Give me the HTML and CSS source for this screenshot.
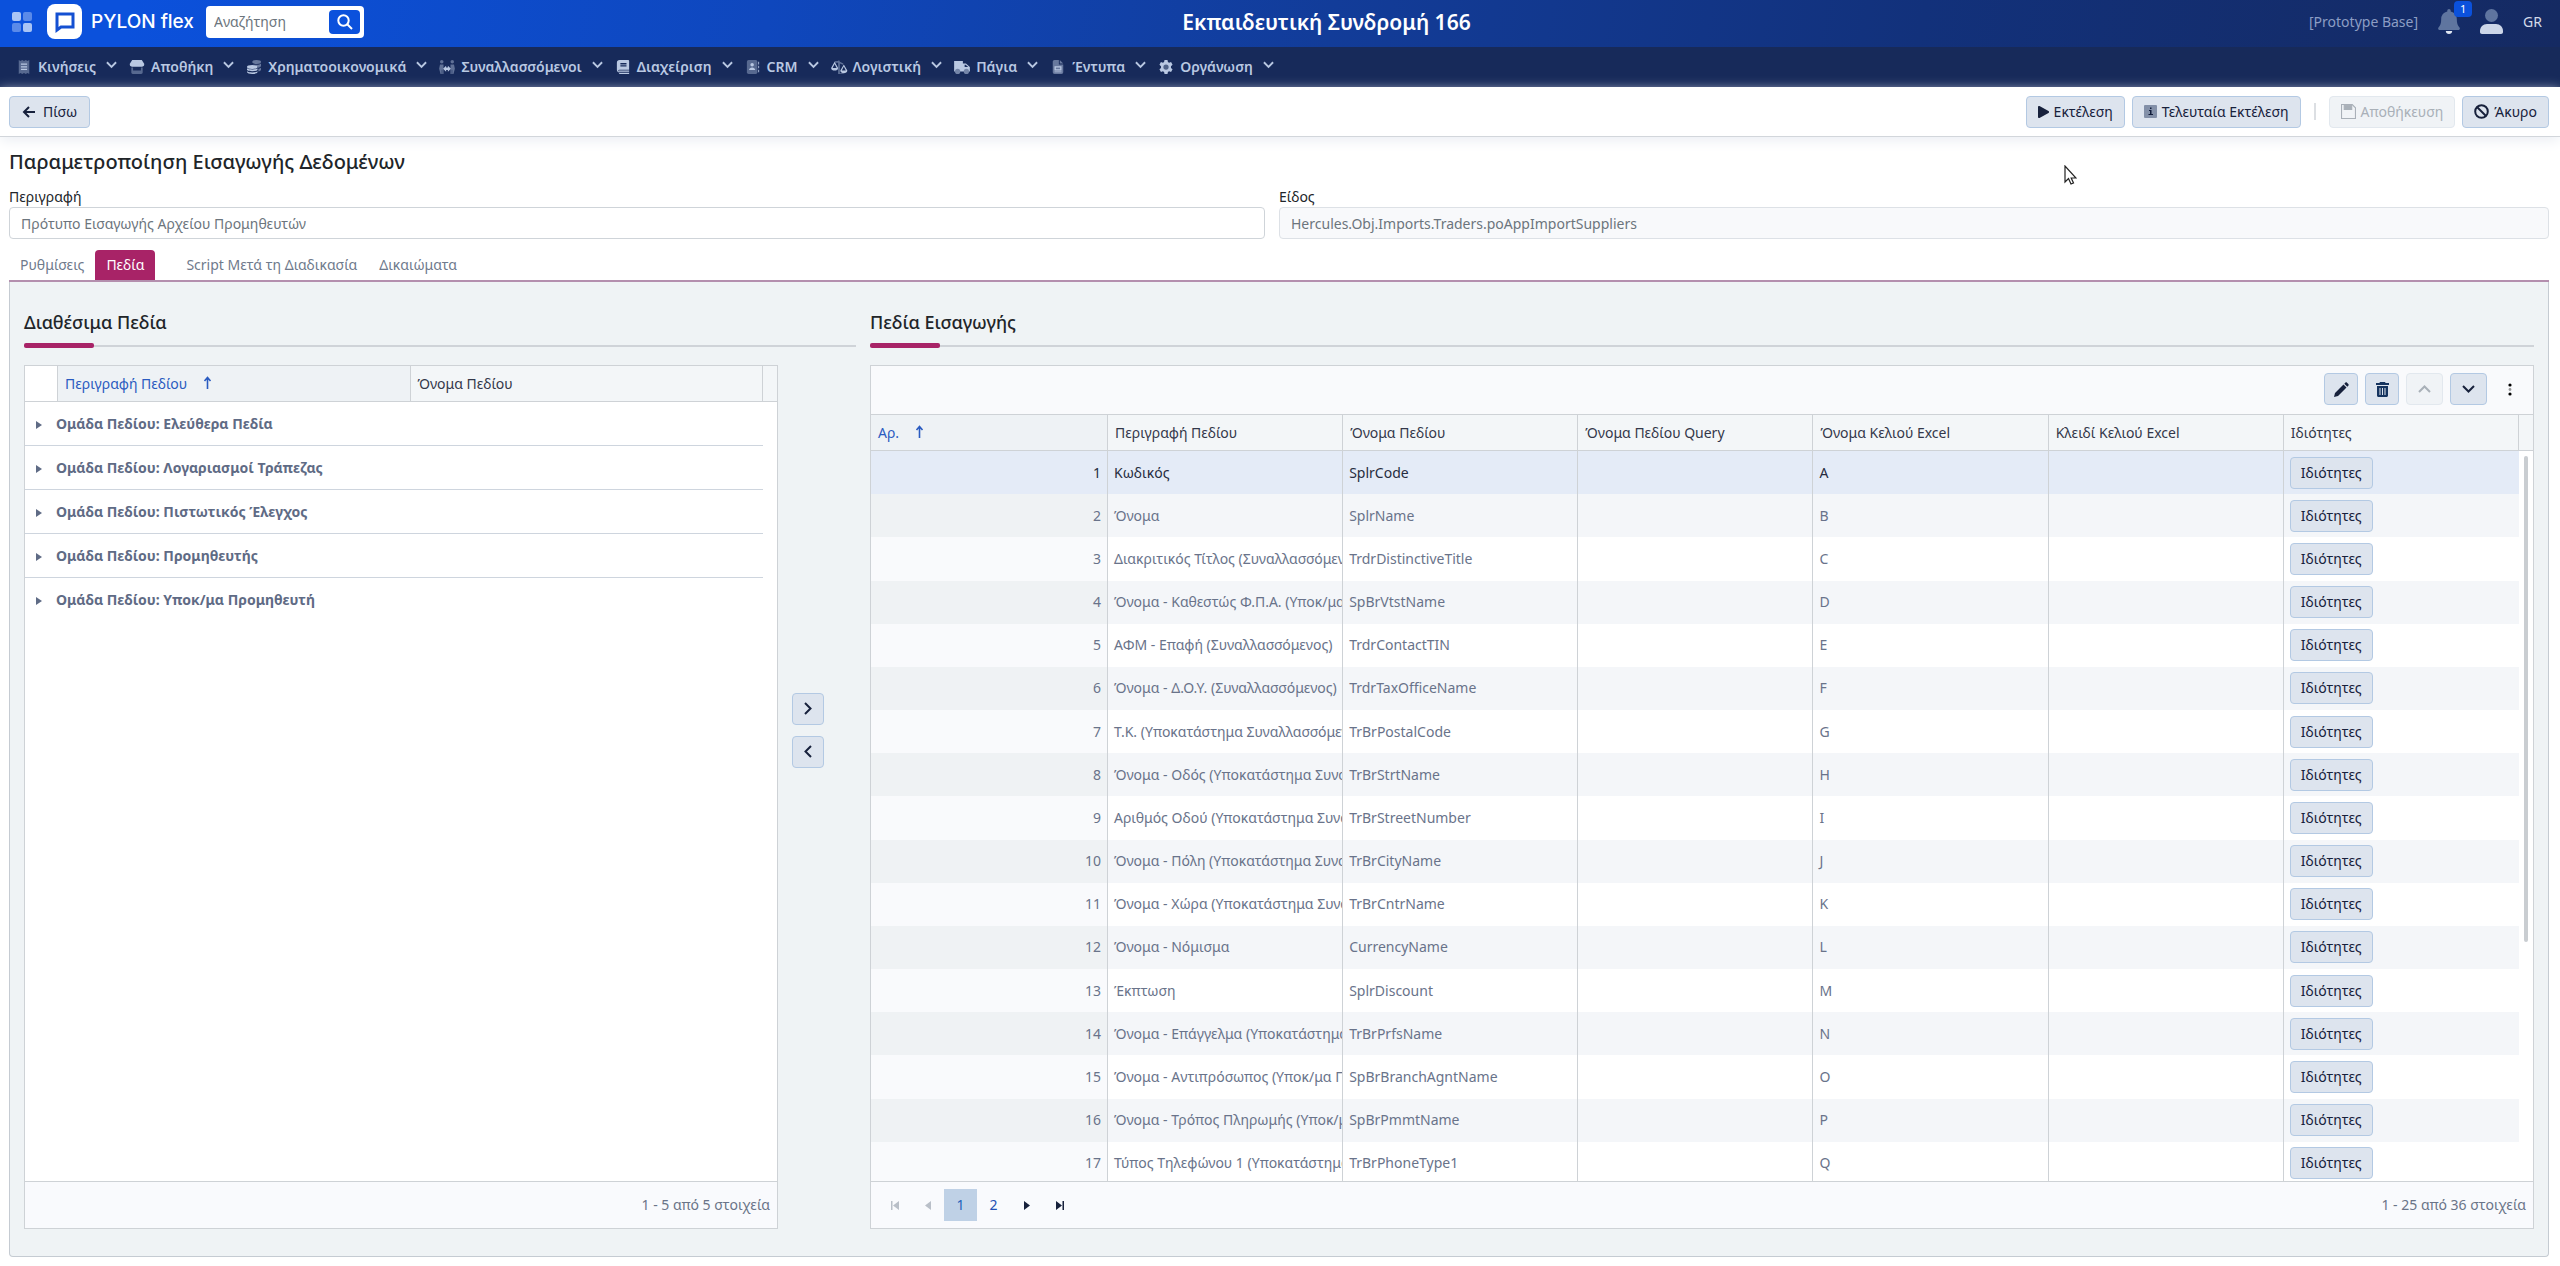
FILE: index.html
```html
<!DOCTYPE html>
<html lang="el">
<head>
  <meta charset="UTF-8" />
  <meta name="viewport" content="width=device-width, initial-scale=1.0"/>
  <title>PYLON flex - Παραμετροποίηση Εισαγωγής Δεδομένων</title>
  <link rel="stylesheet" href="styles.css">
</head>
<body>

  <svg class="defs" width="0" height="0">
    <symbol id="chev" viewBox="0 0 12 8"><path d="M1 1l5 5 5-5" fill="none" stroke="currentColor" stroke-width="2"/></symbol>
    <symbol id="up-arrow" viewBox="0 0 9 13"><path d="M4.500 13V2M1.500 5l3-3.500 3 3.500" fill="none" stroke="currentColor" stroke-width="1.600"/></symbol>
  </svg>

  <header class="topbar">
    <div class="brand">
      <svg class="apps" width="20" height="20" viewBox="0 0 20 20" fill="#a9c4f5">
        <rect width="9" height="9" rx="2"/><rect x="11" width="9" height="9" rx="2" opacity=".5"/>
        <rect y="11" width="9" height="9" rx="2" opacity=".5"/><rect x="11" y="11" width="9" height="9" rx="2"/>
      </svg>
      <svg class="logo" width="35" height="35" viewBox="0 0 35 35">
        <rect width="35" height="35" rx="8" fill="#fff"/>
        <path d="M10 26V10h16v13H14z" fill="none" stroke="#1450d2" stroke-width="3"/>
      </svg>
      <span class="brand-name">PYLON flex</span>
      <form class="search">
        <input type="text" placeholder="Αναζήτηση" aria-label="Αναζήτηση">
        <button type="button" aria-label="Αναζήτηση">
          <svg width="16" height="16" viewBox="0 0 16 16" fill="none" stroke="#fff" stroke-width="2"><circle cx="6.500" cy="6.500" r="5.200"/><path d="M10.500 10.500L15 15"/></svg>
        </button>
      </form>
    </div>
    <div class="company">Εκπαιδευτική Συνδρομή 166</div>
    <div class="user">
      <span class="base">[Prototype Base]</span>
      <a href="#" class="bell" aria-label="Ειδοποιήσεις">
        <svg width="22" height="25" viewBox="0 0 22 25"><path d="M11 0c1 0 1.700.8 1.700 1.700v.8c3.600.8 6.100 3.700 6.100 7.500 0 4.500 1 6.500 2.700 8.400.8 1 .3 2.600-1.200 2.600H1.700C.2 21-.3 19.400.500 18.400 2.200 16.500 3.200 14.500 3.200 10c0-3.800 2.500-6.700 6.100-7.500v-.8C9.300.800 10 0 11 0z" fill="#5f759f"/><path d="M7.800 22h6.400c0 1.700-1.400 3-3.200 3s-3.200-1.300-3.200-3z" fill="#dfe6f2"/></svg>
        <span class="badge">1</span>
      </a>
      <a href="#" aria-label="Χρήστης"><svg width="23" height="25" viewBox="0 0 23 25"><circle cx="11.500" cy="6.500" r="6.500" fill="#5f759f"/><path d="M7 15h9c4 0 7 3 7 7v1c0 1.200-.8 2-2 2H2c-1.200 0-2-.8-2-2v-1c0-4 3-7 7-7z" fill="#ccd6e8"/></svg></a>
      <span class="lang">GR</span>
    </div>
  </header>

  <nav class="menu">
    <a href="#"><svg class="ico" viewBox="0 0 20 16"><path d="M4 0l2 1.200L8 0l2 1.200L12 0l2 1.200L16 0v16l-2-1.200L12 16l-2-1.200L8 16l-2-1.200L4 16z" opacity=".4"/><path d="M6.500 4h7v1.500h-7zM6.500 7h7v1.500h-7zM6.500 10h7v1.500h-7z"/></svg>Κινήσεις<svg class="chev"><use href="#chev"/></svg></a>
    <a href="#"><svg class="ico" viewBox="0 0 20 16"><path d="M4.500 0h11L18 4c.8 1.700-.3 3.600-2.200 3.600H4.200C2.300 7.600 1.200 5.700 2 4z"/><path d="M3.500 8.500h2V12h9V8.500h2V14c0 1-.7 2-1.700 2H5.200c-1 0-1.700-1-1.700-2z" opacity=".4"/></svg>Αποθήκη<svg class="chev"><use href="#chev"/></svg></a>
    <a href="#"><svg class="ico" viewBox="0 0 20 16"><g opacity=".5"><ellipse cx="13" cy="2.300" rx="5" ry="2.200"/><path d="M13 5.500c2.300 0 4.300-.6 5-1.500v2.500c0 1.200-1.500 2-3.500 2.300C13.500 7 11 5.800 8 5.500zM15 10c1.300-.2 2.400-.6 3-1.200v2.400c0 1-1.200 1.700-3 2z"/></g><ellipse cx="8" cy="8" rx="6" ry="2.200"/><path d="M2 9.500c2 1.800 10 1.800 12 0v2c-2 1.800-10 1.800-12 0zM2 12.800c2 1.800 10 1.800 12 0v1c0 2.900-12 2.900-12 0z"/></svg>Χρηματοοικονομικά<svg class="chev"><use href="#chev"/></svg></a>
    <a href="#"><svg class="ico" viewBox="0 0 20 16"><g opacity=".45"><circle cx="4" cy="2" r="2"/><circle cx="16" cy="2" r="2"/><path d="M2 5h4v11H4.600v-5H4v5H2.600L1 10zM18 5h-4v11h1.400v-5h.6v5h1.400L19 10z"/></g><path d="M9 6.500v2h2v-2l3.500 3.500-3.500 3.500v-2H9v2L5.500 10z"/></svg>Συναλλασσόμενοι<svg class="chev"><use href="#chev"/></svg></a>
    <a href="#"><svg class="ico" viewBox="0 0 20 16"><path d="M6 0h10c.6 0 1 .4 1 1v10H6c-2 0-2 1 0 3H5c-1.200-.5-2-1.500-2-3V3c0-1.700 1.300-3 3-3zm1 3.500V5h7V3.500zM7 6v1.500h7V6z" fill-rule="evenodd"/><path d="M5 12h12v1.500H5zM5 14.500h12V16H6z"/></svg>Διαχείριση<svg class="chev"><use href="#chev"/></svg></a>
    <a href="#"><svg class="ico" viewBox="0 0 20 16"><rect x="3" width="12" height="16" rx="2" opacity=".4"/><circle cx="9" cy="5.500" r="2"/><path d="M5.500 11.500c0-4 7-4 7 0zM16 2h1v3h-1zM16 6.500h1v3h-1zM16 11h1v3h-1z"/></svg>CRM<svg class="chev"><use href="#chev"/></svg></a>
    <a href="#"><svg class="ico" viewBox="0 0 20 16"><path d="M5 1.500L9 1l1-1 1 2 4 2-.5 1.500L11 4v11h4v1H9V3L5 3z" opacity=".45"/><path d="M5 2L1 9c0 4 8 4 8 0zm0 2.500L7.300 9H2.700zM15.500 5l-4 7c0 4 8 4 8 0zm0 2.500l2.300 4.500h-4.600z" fill-rule="evenodd"/></svg>Λογιστική<svg class="chev"><use href="#chev"/></svg></a>
    <a href="#"><svg class="ico" viewBox="0 0 20 16"><path d="M1 1h10v3h3.500L19 8v5H1z"/><path d="M13 5.500h1.200L17 8h-4z" fill="#1b2f60"/><circle cx="5" cy="13" r="3" fill="#7485a8"/><circle cx="15" cy="13" r="3" fill="#7485a8"/></svg>Πάγια<svg class="chev"><use href="#chev"/></svg></a>
    <a href="#"><svg class="ico" viewBox="0 0 20 16"><path d="M4 2c0-1.100.9-2 2-2h5v5h5v9a2 2 0 0 1-2 2H6a2 2 0 0 1-2-2zM12 0l4 4h-4z" opacity=".5"/><path d="M6 7h8v5H6zm1.500 1.500v2h5v-2zM6 13h8v1H6z" fill-rule="evenodd"/></svg>Έντυπα<svg class="chev"><use href="#chev"/></svg></a>
    <a href="#"><svg class="ico" viewBox="0 0 20 16"><path d="M8.300 0h3.400l.5 2.400 1.300.8 2.300-.8 1.700 3-1.800 1.600v2l1.800 1.600-1.700 3-2.300-.8-1.300.8-.5 2.400H8.300l-.5-2.400-1.300-.8-2.300.8-1.700-3L4.300 9V7L2.500 5.400l1.700-3 2.300.8 1.300-.8z"/><circle cx="10" cy="8" r="3" fill="#4f6288"/></svg>Οργάνωση<svg class="chev"><use href="#chev"/></svg></a>
  </nav>

  <div class="toolbar">
    <button type="button" class="btn back"><svg width="13" height="12" viewBox="0 0 13 12" fill="none" stroke="currentColor" stroke-width="2"><path d="M13 6H2M7 1L2 6l5 5"/></svg>Πίσω</button>
    <div class="actions">
      <button type="button" class="btn"><svg width="11" height="12" viewBox="0 0 11 12" fill="currentColor"><path d="M0 1c0-.8.8-1.300 1.500-.9l9 5c.7.4.7 1.400 0 1.800l-9 5C.8 12.300 0 11.800 0 11z"/></svg>Εκτέλεση</button>
      <button type="button" class="btn"><svg width="13" height="13" viewBox="0 0 13 13"><rect width="13" height="13" rx="1" fill="#8390a8"/><path d="M5 5h2.500v4H9v1H4.500V9H6V6H5zM6 2.500h1.500V4H6z" fill="#111c3a"/></svg>Τελευταία Εκτέλεση</button>
      <span class="sep"></span>
      <button type="button" class="btn" disabled><svg width="15" height="15" viewBox="0 0 14 14" fill="none" stroke="currentColor"><path d="M.500.500h10l3 3v10H.500z"/><path d="M3 1v4h7V1z" fill="currentColor"/></svg>Αποθήκευση</button>
      <button type="button" class="btn"><svg width="15" height="15" viewBox="0 0 15 15" fill="none" stroke="currentColor" stroke-width="2"><circle cx="7.500" cy="7.500" r="6.300"/><path d="M3 3l9 9"/></svg>Άκυρο</button>
    </div>
  </div>

  <main>
    <h1>Παραμετροποίηση Εισαγωγής Δεδομένων</h1>

    <div class="fields">
      <div class="field">
        <label for="descr">Περιγραφή</label>
        <input type="text" id="descr" value="Πρότυπο Εισαγωγής Αρχείου Προμηθευτών">
      </div>
      <div class="field">
        <label for="kind">Είδος</label>
        <input type="text" id="kind" value="Hercules.Obj.Imports.Traders.poAppImportSuppliers" readonly>
      </div>
    </div>

    <div class="tabs">
      <a href="#">Ρυθμίσεις</a>
      <a href="#" class="active">Πεδία</a>
      <a href="#" class="after-gap">Script Μετά τη Διαδικασία</a>
      <a href="#">Δικαιώματα</a>
    </div>

    <section class="panel">
      <div class="available">
        <h2>Διαθέσιμα Πεδία</h2>
        <div class="row">
          <div class="grid">
            <div class="grid-head">
              <table>
                <colgroup><col class="c-exp"><col><col></colgroup>
                <thead><tr><th class="exp"></th><th class="sorted">Περιγραφή Πεδίου <svg class="sort"><use href="#up-arrow"/></svg></th><th>Όνομα Πεδίου</th></tr></thead>
              </table>
            </div>
            <div class="grid-body">
              <table class="groups">
                <tbody>
                  <tr><td>Ομάδα Πεδίου: Ελεύθερα Πεδία</td></tr>
                  <tr><td>Ομάδα Πεδίου: Λογαριασμοί Τράπεζας</td></tr>
                  <tr><td>Ομάδα Πεδίου: Πιστωτικός Έλεγχος</td></tr>
                  <tr><td>Ομάδα Πεδίου: Προμηθευτής</td></tr>
                  <tr><td>Ομάδα Πεδίου: Υποκ/μα Προμηθευτή</td></tr>
                </tbody>
              </table>
            </div>
            <div class="pager"><span class="info">1 - 5 από 5 στοιχεία</span></div>
          </div>
          <div class="move">
            <button type="button" class="btn" aria-label="Προσθήκη"><svg width="8" height="13" viewBox="0 0 8 13" fill="none" stroke="currentColor" stroke-width="2"><path d="M1 1l5.500 5.500L1 12"/></svg></button>
            <button type="button" class="btn" aria-label="Αφαίρεση"><svg width="8" height="13" viewBox="0 0 8 13" fill="none" stroke="currentColor" stroke-width="2"><path d="M7 1L1.500 6.500 7 12"/></svg></button>
          </div>
        </div>
      </div>

      <div class="imported">
        <h2>Πεδία Εισαγωγής</h2>
        <div class="grid">
          <div class="grid-tools">
            <button type="button" class="btn" aria-label="Επεξεργασία"><svg width="15" height="15" viewBox="0 0 15 15" fill="currentColor"><path d="M0 15l1-4L9.500 2.500 12.500 5.500 4 14zM10.300 1.700l1-1c.5-.5 1.200-.5 1.700 0l1.300 1.300c.5.5.5 1.200 0 1.700l-1 1z"/></svg></button>
            <button type="button" class="btn" aria-label="Διαγραφή"><svg width="13" height="15" viewBox="0 0 13 15" fill="#16345f"><path d="M4 0h5l.6 1H13v2H0V1h3.400zM1 4h11v9.500c0 .8-.7 1.500-1.500 1.500h-8C1.700 15 1 14.300 1 13.500zm2.500 2v7h1V6zM6 6v7h1V6zm2.500 0v7h1V6z" fill-rule="evenodd"/></svg></button>
            <button type="button" class="btn wide" aria-label="Πάνω" disabled><svg width="13" height="8" viewBox="0 0 13 8" fill="none" stroke="currentColor" stroke-width="2"><path d="M1 7l5.500-5.500L12 7"/></svg></button>
            <button type="button" class="btn wide" aria-label="Κάτω"><svg width="13" height="8" viewBox="0 0 13 8" fill="none" stroke="currentColor" stroke-width="2"><path d="M1 1l5.500 5.500L12 1"/></svg></button>
            <button type="button" class="more" aria-label="Περισσότερα"><svg width="4" height="13" viewBox="0 0 4 13"><circle cx="2" cy="2" r="1.600"/><circle cx="2" cy="6.500" r="1.400" opacity=".4"/><circle cx="2" cy="11" r="1.600"/></svg></button>
          </div>
          <div class="grid-head">
            <table>
              <colgroup><col class="c-num"></colgroup>
              <thead><tr><th class="sorted">Αρ. <svg class="sort"><use href="#up-arrow"/></svg></th><th>Περιγραφή Πεδίου</th><th>Όνομα Πεδίου</th><th>Όνομα Πεδίου Query</th><th>Όνομα Κελιού Excel</th><th>Κλειδί Κελιού Excel</th><th>Ιδιότητες</th></tr></thead>
            </table>
          </div>
          <div class="grid-body">
            <table class="items">
              <colgroup><col class="c-num"></colgroup>
              <tbody>
                <tr class="selected"><td>1</td><td>Κωδικός</td><td>SplrCode</td><td></td><td>A</td><td></td><td><button type="button" class="btn">Ιδιότητες</button></td></tr>
                <tr><td>2</td><td>Όνομα</td><td>SplrName</td><td></td><td>B</td><td></td><td><button type="button" class="btn">Ιδιότητες</button></td></tr>
                <tr><td>3</td><td>Διακριτικός Τίτλος (Συναλλασσόμενος)</td><td>TrdrDistinctiveTitle</td><td></td><td>C</td><td></td><td><button type="button" class="btn">Ιδιότητες</button></td></tr>
                <tr><td>4</td><td>Όνομα - Καθεστώς Φ.Π.Α. (Υποκ/μα Προμηθευτή)</td><td>SpBrVtstName</td><td></td><td>D</td><td></td><td><button type="button" class="btn">Ιδιότητες</button></td></tr>
                <tr><td>5</td><td>ΑΦΜ - Επαφή (Συναλλασσόμενος)</td><td>TrdrContactTIN</td><td></td><td>E</td><td></td><td><button type="button" class="btn">Ιδιότητες</button></td></tr>
                <tr><td>6</td><td>Όνομα - Δ.Ο.Υ. (Συναλλασσόμενος)</td><td>TrdrTaxOfficeName</td><td></td><td>F</td><td></td><td><button type="button" class="btn">Ιδιότητες</button></td></tr>
                <tr><td>7</td><td>Τ.Κ. (Υποκατάστημα Συναλλασσόμενου)</td><td>TrBrPostalCode</td><td></td><td>G</td><td></td><td><button type="button" class="btn">Ιδιότητες</button></td></tr>
                <tr><td>8</td><td>Όνομα - Οδός (Υποκατάστημα Συναλλασσόμενου)</td><td>TrBrStrtName</td><td></td><td>H</td><td></td><td><button type="button" class="btn">Ιδιότητες</button></td></tr>
                <tr><td>9</td><td>Αριθμός Οδού (Υποκατάστημα Συναλλασσόμενου)</td><td>TrBrStreetNumber</td><td></td><td>I</td><td></td><td><button type="button" class="btn">Ιδιότητες</button></td></tr>
                <tr><td>10</td><td>Όνομα - Πόλη (Υποκατάστημα Συναλλασσόμενου)</td><td>TrBrCityName</td><td></td><td>J</td><td></td><td><button type="button" class="btn">Ιδιότητες</button></td></tr>
                <tr><td>11</td><td>Όνομα - Χώρα (Υποκατάστημα Συναλλασσόμενου)</td><td>TrBrCntrName</td><td></td><td>K</td><td></td><td><button type="button" class="btn">Ιδιότητες</button></td></tr>
                <tr><td>12</td><td>Όνομα - Νόμισμα</td><td>CurrencyName</td><td></td><td>L</td><td></td><td><button type="button" class="btn">Ιδιότητες</button></td></tr>
                <tr><td>13</td><td>Έκπτωση</td><td>SplrDiscount</td><td></td><td>M</td><td></td><td><button type="button" class="btn">Ιδιότητες</button></td></tr>
                <tr><td>14</td><td>Όνομα - Επάγγελμα (Υποκατάστημα Συναλλασσόμενου)</td><td>TrBrPrfsName</td><td></td><td>N</td><td></td><td><button type="button" class="btn">Ιδιότητες</button></td></tr>
                <tr><td>15</td><td>Όνομα - Αντιπρόσωπος (Υποκ/μα Προμηθευτή)</td><td>SpBrBranchAgntName</td><td></td><td>O</td><td></td><td><button type="button" class="btn">Ιδιότητες</button></td></tr>
                <tr><td>16</td><td>Όνομα - Τρόπος Πληρωμής (Υποκ/μα Προμηθευτή)</td><td>SpBrPmmtName</td><td></td><td>P</td><td></td><td><button type="button" class="btn">Ιδιότητες</button></td></tr>
                <tr><td>17</td><td>Τύπος Τηλεφώνου 1 (Υποκατάστημα Συναλλασσόμενου)</td><td>TrBrPhoneType1</td><td></td><td>Q</td><td></td><td><button type="button" class="btn">Ιδιότητες</button></td></tr>
              </tbody>
            </table>
            <div class="scroll"><div class="thumb"></div></div>
          </div>
          <div class="pager">
            <a href="#" class="off" aria-label="Πρώτη"><svg width="8" height="9" viewBox="0 0 8 9"><path d="M0 0h1.500v9H0zM8 0v9L2 4.500z"/></svg></a>
            <a href="#" class="off" aria-label="Προηγούμενη"><svg width="6" height="9" viewBox="0 0 6 9"><path d="M6 0v9L0 4.500z"/></svg></a>
            <a href="#" class="current">1</a>
            <a href="#">2</a>
            <a href="#" class="dark" aria-label="Επόμενη"><svg width="6" height="9" viewBox="0 0 6 9"><path d="M0 0v9l6-4.500z"/></svg></a>
            <a href="#" class="dark" aria-label="Τελευταία"><svg width="8" height="9" viewBox="0 0 8 9"><path d="M6.500 0H8v9H6.500zM0 0v9l6-4.500z"/></svg></a>
            <span class="info">1 - 25 από 36 στοιχεία</span>
          </div>
        </div>
      </div>
    </section>
  </main>

  <svg class="cursor" width="13" height="20" viewBox="0 0 13 20"><path d="M1 1v16l3.500-3.500L7 19l2.500-1-2.300-5H12z" fill="#fff" stroke="#222" stroke-width="1.200"/></svg>

</body>
</html>
```

FILE: styles.css
```css
* {
  box-sizing: border-box;
}
body {
  margin: 0;
  height: 100vh;
  display: flex;
  flex-direction: column;
  background: #fff;
  color: #212529;
  font-family: "Noto Sans", sans-serif;
  font-size: 14px;
  line-height: 20px;
}
a {
  text-decoration: none;
  color: inherit;
}
svg {
  flex: none;
}
.defs, .cursor {
  position: absolute;
}
.cursor {
  left: 2064px;
  top: 165px;
}
input, button {
  font: inherit;
}

/* top bar */
.topbar {
  flex: none;
  height: 47px;
  padding: 0 18px 0 12px;
  display: flex;
  align-items: center;
  justify-content: space-between;
  background: linear-gradient(100deg, #0b51dc 5%, #0f47bd 30%, #123c99 52%, #12317b 75%, #152a62 100%);
}
.brand {
  display: flex;
  align-items: center;
  padding-bottom: 4px;
}
.logo {
  margin: 0 9px 0 15px;
}
.brand-name {
  width: 115px;
  font-family: Inter, sans-serif;
  font-size: 19px;
  font-weight: 500;
  color: #fff;
  white-space: nowrap;
}
.search {
  width: 158px;
  height: 32px;
  padding: 0 4px 0 8px;
  display: flex;
  align-items: center;
  background: #fff;
  border-radius: 4px;
}
.search input {
  flex: 1;
  min-width: 0;
  padding: 0;
  border: 0;
  outline: 0;
}
.search input::placeholder {
  color: #6c757d;
}
.search button {
  width: 31px;
  height: 24px;
  padding: 0;
  border: 0;
  border-radius: 4px;
  background: #0b51dc;
  display: flex;
  align-items: center;
  justify-content: center;
}
.company {
  padding: 0 20px 4px 0;
  font-size: 21px;
  font-weight: 600;
  color: #fff;
}
.user {
  display: flex;
  align-items: center;
  gap: 20px;
  padding-bottom: 4px;
  color: #d3daea;
}
.base {
  color: #8c9dc4;
}
.bell {
  position: relative;
}
.bell svg, .user a svg {
  display: block;
}
.badge {
  position: absolute;
  left: 16px;
  top: -8px;
  width: 18px;
  height: 16px;
  border-radius: 4px;
  background: #0b51dc;
  color: #fff;
  font-size: 11px;
  line-height: 16px;
  text-align: center;
}

/* main menu */
.menu {
  flex: none;
  height: 40px;
  padding-left: 14px;
  display: flex;
  align-items: center;
  gap: 10px;
  background: #172a5a;
  color: #b9c8e2;
  font-weight: 600;
}
.menu a {
  display: flex;
  align-items: center;
}
.ico {
  width: 20px;
  height: 14px;
  margin-right: 4px;
  fill: #b9c8e2;
}
.chev {
  width: 11px;
  height: 8px;
  margin: 0 0 4px 10px;
}

/* buttons */
.btn {
  height: 32px;
  padding: 0 10px;
  display: inline-flex;
  align-items: center;
  justify-content: center;
  gap: 5px;
  border: 1px solid #b3c9e3;
  border-radius: 4px;
  background: #dde4ee;
  color: #17213c;
  white-space: nowrap;
}
.btn:disabled {
  border-color: #e2e8ee;
  background: #f0f3f6;
  color: #a9b0b8;
}
.toolbar {
  flex: none;
  height: 50px;
  padding: 0 11px 0 9px;
  display: flex;
  align-items: center;
  justify-content: space-between;
  border-bottom: 1px solid #d2d6db;
  box-shadow: 0 4px 12px #eceff4;
}
.back {
  gap: 8px;
  padding: 0 12px;
}
.actions {
  display: flex;
  align-items: center;
  gap: 7px;
}
.actions .btn {
  padding: 0 11px;
}
.sep {
  width: 2px;
  height: 17px;
  margin: 0 6px;
  background: #dcdfe3;
}

main {
  flex: 1;
  min-height: 0;
  padding: 10px 11px 9px 9px;
  display: flex;
  flex-direction: column;
}
h1 {
  margin: 0;
  font-size: 20px;
  line-height: 30px;
  font-weight: 500;
}
.fields {
  display: grid;
  grid-template-columns: 1256fr 1270fr;
  gap: 14px;
  margin: 10px 0 11px;
}
.field label {
  display: block;
}
.field input {
  width: 100%;
  height: 32px;
  padding: 0 11px;
  border: 1px solid #cfd4d9;
  border-radius: 4px;
  color: #6c757d;
  background: #fff;
}
.field input[readonly] {
  background: #f8f9fb;
  border-color: #dde1e6;
}

.tabs {
  display: flex;
  border-bottom: 2px solid #b48fae;
  color: #6f7a8c;
}
.tabs a {
  padding: 5px 11px;
}
.tabs .active {
  border-radius: 4px 4px 0 0;
  background: #a82367;
  color: #fff;
}
.tabs .after-gap {
  margin-left: 20px;
}

/* panel with the two grids */
.panel {
  flex: 1;
  min-height: 0;
  padding: 25px 14px 27px;
  display: grid;
  grid-template-columns: 832fr 1664fr;
  grid-template-rows: minmax(0, 1fr);
  gap: 14px;
  border: 1px solid #c5cbd2;
  border-top: 0;
  border-radius: 0 0 4px 4px;
  background: #eff3f5;
}
.available, .imported {
  min-width: 0;
  display: flex;
  flex-direction: column;
}
h2 {
  position: relative;
  margin: 0 0 18px;
  padding-bottom: 8px;
  border-bottom: 2px solid #cfd3d8;
  font-size: 18px;
  line-height: 30px;
  font-weight: 500;
}
h2::after {
  content: "";
  position: absolute;
  left: 0;
  bottom: -3px;
  width: 70px;
  height: 5px;
  border-radius: 2px;
  background: #a82367;
}
.row {
  flex: 1;
  min-height: 0;
  display: flex;
}
.grid {
  flex: 1;
  min-width: 0;
  min-height: 0;
  display: flex;
  flex-direction: column;
  border: 1px solid #ced2d6;
  background: #fff;
}
.move {
  width: 78px;
  padding: 0 32px 134px 14px;
  display: flex;
  flex-direction: column;
  justify-content: center;
  gap: 11px;
}
.move .btn {
  width: 32px;
  padding: 0;
}
table {
  width: 100%;
  table-layout: fixed;
  border-collapse: separate;
  border-spacing: 0;
}
.grid-head {
  flex: none;
  padding-right: 14px;
  border-bottom: 1px solid #ced2d6;
  background: #f3f6f8;
}
th {
  height: 35px;
  padding: 0 7px;
  border-right: 1px solid #ced2d6;
  text-align: left;
  font-weight: 400;
  color: #33384a;
}
.c-exp {
  width: 33px;
}
.c-num {
  width: 237px;
}
.exp {
  background: #fff;
}
.sorted {
  background: #eef2f5;
  color: #2a5bc0;
}
.sort {
  width: 9px;
  height: 13px;
  margin-left: 12px;
}
.grid-body {
  flex: 1;
  min-height: 0;
  overflow: hidden;
  padding-right: 14px;
  position: relative;
}
td {
  padding: 0 6px;
  border-right: 1px solid #ced2d6;
  color: #69738a;
  white-space: nowrap;
  overflow: hidden;
}
td:last-child {
  border-right: 0;
}
.groups {
  height: 220px;
}
.groups td {
  padding-left: 11px;
  border-bottom: 1px solid #ced5de;
  color: #5f6b85;
  font-weight: 700;
}
.groups td::before {
  content: "";
  display: inline-block;
  margin-right: 14px;
  border: 4px solid transparent;
  border-left: 6px solid #5f6b85;
  border-right: 0;
}
.groups tr:last-child td {
  border-bottom-color: transparent;
}
.items {
  height: 734px;
}
.items td:first-child {
  background: #f9fafc;
  text-align: right;
}
.items tr:nth-child(even) td {
  background: #f4f6f9;
}
.items tr:nth-child(even) td:first-child {
  background: #eff2f4;
}
.items .selected td, .items .selected td:first-child {
  background: #e4ebf7;
  color: #272d40;
}
.items .btn {
  vertical-align: middle;
}
.scroll {
  position: absolute;
  top: 5px;
  right: 5px;
  bottom: 0;
  width: 4px;
}
.thumb {
  height: 67%;
  border-radius: 2px;
  background: #c9cdd1;
}
.grid-tools {
  flex: none;
  height: 49px;
  padding: 0 7px 2px 0;
  display: flex;
  align-items: center;
  justify-content: flex-end;
  gap: 7px;
  border-bottom: 1px solid #ced2d6;
  background: #f9fafc;
}
.grid-tools .btn {
  width: 34px;
  padding: 0;
}
.grid-tools .wide {
  width: 37px;
}
.more {
  width: 32px;
  height: 32px;
  padding: 0;
  border: 0;
  background: none;
}
.more svg {
  display: block;
  margin: auto;
}
.pager {
  flex: none;
  height: 47px;
  padding: 0 7px;
  display: flex;
  align-items: center;
  border-top: 1px solid #ced2d6;
  background: #f9fafd;
  color: #6a7488;
}
.pager a {
  width: 33px;
  height: 32px;
  display: flex;
  align-items: center;
  justify-content: center;
  color: #2450b4;
}
.pager .current {
  background: #bfd1e6;
  color: #2463bb;
}
.pager svg {
  fill: currentColor;
}
.pager .off {
  color: #b9bfc8;
}
.pager .dark {
  color: #17213c;
}
.info {
  margin-left: auto;
}
```
